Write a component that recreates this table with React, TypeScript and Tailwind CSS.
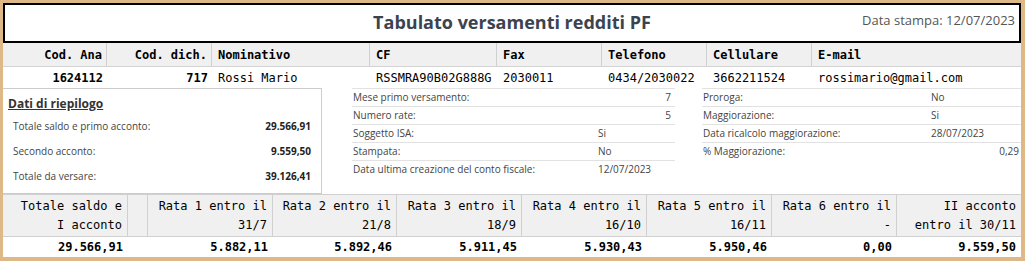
import React from 'react';

const mono = "font-['DejaVu_Sans_Mono',monospace]";
const sans = "font-['Open_Sans',sans-serif]";

// top contact table: [label, value, align, bold value]
const contactCols: { label: string; value: string; right?: boolean; strong?: boolean }[] = [
  { label: 'Cod. Ana', value: '1624112', right: true, strong: true },
  { label: 'Cod. dich.', value: '717', right: true, strong: true },
  { label: 'Nominativo', value: 'Rossi Mario' },
  { label: 'CF', value: 'RSSMRA90B02G888G' },
  { label: 'Fax', value: '2030011' },
  { label: 'Telefono', value: '0434/2030022' },
  { label: 'Cellulare', value: '3662211524' },
  { label: 'E-mail', value: 'rossimario@gmail.com' },
];

const riepilogo = [
  ['Totale saldo e primo acconto:', '29.566,91'],
  ['Secondo acconto:', '9.559,50'],
  ['Totale da versare:', '39.126,41'],
];

const infoMid: { label: string; value: string; right?: boolean }[] = [
  { label: 'Mese primo versamento:', value: '7', right: true },
  { label: 'Numero rate:', value: '5', right: true },
  { label: 'Soggetto ISA:', value: 'Si' },
  { label: 'Stampata:', value: 'No' },
  { label: 'Data ultima creazione del conto fiscale:', value: '12/07/2023' },
];

const infoRight: { label: string; value: string; right?: boolean }[] = [
  { label: 'Proroga:', value: 'No' },
  { label: 'Maggiorazione:', value: 'Si' },
  { label: 'Data ricalcolo maggiorazione:', value: '28/07/2023' },
  { label: '% Maggiorazione:', value: '0,29', right: true },
];

// rate table, null entry = narrow empty spacer column
const rate: ({ l1: string; l2: string; value: string } | null)[] = [
  { l1: 'Totale saldo e', l2: 'I acconto', value: '29.566,91' },
  null,
  { l1: 'Rata 1 entro il', l2: '31/7', value: '5.882,11' },
  { l1: 'Rata 2 entro il', l2: '21/8', value: '5.892,46' },
  { l1: 'Rata 3 entro il', l2: '18/9', value: '5.911,45' },
  { l1: 'Rata 4 entro il', l2: '16/10', value: '5.930,43' },
  { l1: 'Rata 5 entro il', l2: '16/11', value: '5.950,46' },
  { l1: 'Rata 6 entro il', l2: '-', value: '0,00' },
  { l1: 'II acconto', l2: 'entro il 30/11', value: '9.559,50' },
];

function InfoTable({ rows, labelW, valuePad }: { rows: typeof infoMid; labelW: string; valuePad: string }) {
  return (
    <div className={`flex flex-col text-[10px] text-[#444] ${sans}`}>
      {rows.map((r) => (
        <div key={r.label} className="flex h-[18px] items-center border-t border-[#e2e2e2]">
          <span className={`${labelW} shrink-0 pl-[1px]`}>{r.label}</span>
          <span className={`flex-1 ${r.right ? `text-right ${valuePad}` : ''}`}>{r.value}</span>
        </div>
      ))}
    </div>
  );
}

export default function App() {
  return (
    <div className="w-[1025px] h-[261px] overflow-hidden bg-white border-l-[3px] border-t-[3px] border-r-4 border-b-4 border-[#deb887] flex flex-col">
      {/* Title bar */}
      <div className="h-[40px] shrink-0 border-2 border-black grid grid-cols-[1fr_auto_1fr] items-start pt-[5px]">
        <div />
        <h1 className={`${sans} font-bold text-[18px] leading-[24px] text-[#3c4350]`}>
          Tabulato versamenti redditi PF
        </h1>
        <div className={`${sans} text-[13px] leading-[18px] mt-[1px] text-[#555] text-right pr-[4px]`}>
          Data stampa: 12/07/2023
        </div>
      </div>

      {/* Anagrafica */}
      <div className={`${mono} text-[12px] text-black`}>
        <div className="grid grid-cols-[104px_105px_158px_127px_105px_105px_105px_209px] h-[24px] bg-[#f0f0f0] border-b border-[#d4d4d4]">
          {contactCols.map((c, i) => (
            <div
              key={c.label}
              className={`flex items-center font-bold ${c.right ? 'justify-end pr-[4px]' : 'pl-[6px]'} ${
                i < contactCols.length - 1 ? 'border-r border-[#d0d0d0]' : ''
              }`}
            >
              {c.label}
            </div>
          ))}
        </div>
        <div className="grid grid-cols-[104px_105px_158px_127px_105px_105px_105px_209px] h-[21px]">
          {contactCols.map((c) => (
            <div
              key={c.label}
              className={`flex items-center whitespace-nowrap ${c.strong ? 'font-bold' : ''} ${
                c.right ? 'justify-end pr-[4px]' : 'pl-[6px]'
              }`}
            >
              {c.value}
            </div>
          ))}
        </div>
      </div>

      {/* Riepilogo + info */}
      <div className="h-[106px] shrink-0 flex gap-[30px]">
        <div className="w-[319px] shrink-0 h-[106px] border border-l-0 border-[#cccccc] pt-[7px]">
          <div className={`${sans} font-bold text-[12px] leading-[16px] underline text-[#333] pl-[5px]`}>
            Dati di riepilogo
          </div>
          <div className={`${sans} text-[10px] text-[#444] mt-[2px]`}>
            {riepilogo.map(([l, v]) => (
              <div key={l} className="flex h-[25px] items-center justify-between pl-[10px] pr-[10px]">
                <span>{l}</span>
                <span className="font-bold text-[#222]">{v}</span>
              </div>
            ))}
          </div>
        </div>
        <div className="w-[323px] shrink-0">
          <InfoTable rows={infoMid} labelW="w-[246px]" valuePad="pr-[4px]" />
        </div>
        <div className="ml-[-3px] w-[319px] shrink-0">
          <InfoTable rows={infoRight} labelW="w-[229px]" valuePad="pr-[2px]" />
        </div>
      </div>

      {/* Rate */}
      <div className={`${mono} text-[12px] text-black`}>
        <div className="grid grid-cols-[125px_20px_125px_124px_125px_125px_125px_125px_124px] h-[43px] bg-[#f0f0f0] border-t border-b border-[#d0d0d0]">
          {rate.map((r, i) => (
            <div
              key={i}
              className={`flex flex-col justify-center items-end pr-[5px] leading-[19px] ${
                i < rate.length - 1 ? 'border-r border-[#d0d0d0]' : ''
              }`}
            >
              {r && (
                <>
                  <span className="whitespace-nowrap">{r.l1}</span>
                  <span className="whitespace-nowrap">{r.l2}</span>
                </>
              )}
            </div>
          ))}
        </div>
        <div className="grid grid-cols-[125px_20px_125px_124px_125px_125px_125px_125px_124px] h-[20px]">
          {rate.map((r, i) => (
            <div key={i} className="flex items-center justify-end pr-[5px] font-bold">
              {r?.value}
            </div>
          ))}
        </div>
      </div>
    </div>
  );
}
